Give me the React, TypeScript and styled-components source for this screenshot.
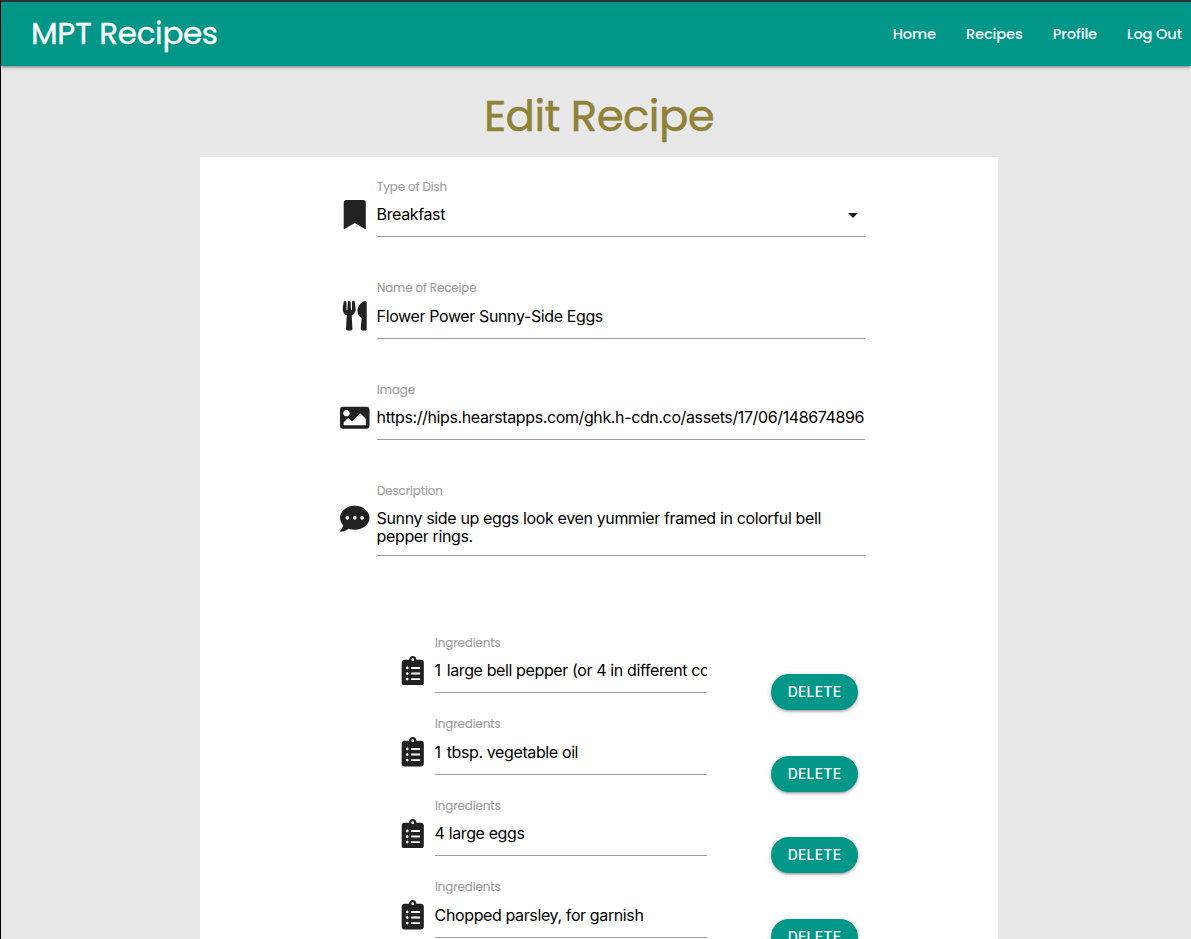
import React from "react";
import styled, { createGlobalStyle } from "styled-components";
import { FaBookmark, FaUtensils, FaImage, FaCommentDots, FaClipboardList } from "react-icons/fa";

const teal = "#009688";

const GlobalStyle = createGlobalStyle`
  *, *::before, *::after { box-sizing: border-box; }
  html, body { margin: 0; height: 939px; overflow: hidden; }
  body { background: #e8e8e8; font-family: Poppins, Inter, sans-serif; color: #212121; }
`;

const Page = styled.div`
  height: 939px;
  overflow: hidden;
  border-left: 1px solid #000;
  border-top: 2px solid #2c3236;
  display: flex;
  flex-direction: column;
`;

const Nav = styled.nav`
  flex: none;
  height: 64px;
  background: ${teal};
  color: #fff;
  display: flex;
  align-items: flex-start;
  justify-content: space-between;
  padding: 0 9px 0 30px;
  box-shadow: 0 2px 2px 0 rgba(0, 0, 0, 0.14), 0 3px 1px -2px rgba(0, 0, 0, 0.12),
    0 1px 5px 0 rgba(0, 0, 0, 0.2);
`;

const Brand = styled.a`
  font-size: 31px;
  line-height: 62px;
  letter-spacing: -0.35px;
  -webkit-text-stroke: 0.35px currentColor;
`;

const NavLinks = styled.div`
  display: flex;
  gap: 30px;
`;

const NavLink = styled.a`
  font-size: 14.6px;
  font-weight: 500;
  line-height: 64px;
  letter-spacing: -0.12px;
  white-space: nowrap;
`;

const Title = styled.h1`
  flex: none;
  margin: 23px 0 0;
  height: 68px;
  line-height: 53px;
  font-size: 43.5px;
  font-weight: 400;
  letter-spacing: -0.6px;
  -webkit-text-stroke: 0.5px currentColor;
  text-align: center;
  color: #908338;
  padding-left: 6px;
`;

const Card = styled.main`
  flex: none;
  width: 798px;
  height: 800px;
  margin-left: 199px;
  padding: 20px 133px 0 140px;
  background: #fff;
`;

const Field = styled.div<{ $height: number }>`
  display: flex;
  height: ${(p) => p.$height}px;
`;

const IconSlot = styled.div`
  flex: none;
  width: 30px;
  height: 30px;
  margin: 22.8px 7px 0 0;
  display: flex;
  justify-content: center;
  font-size: 29.5px;
  color: #212121;
`;

const FieldBody = styled.div`
  flex: 1;
  min-width: 0;
`;

const Label = styled.label`
  display: block;
  height: 20.2px;
  margin-top: -0.2px;
  line-height: 20px;
  font-size: 11.8px;
  letter-spacing: -0.08px;
  -webkit-text-stroke: 0.15px currentColor;
  color: #9e9e9e;
`;

const Value = styled.div`
  display: flex;
  justify-content: space-between;
  height: 40px;
  margin-left: -0.4px;
  border-bottom: 1px solid #9e9e9e;
  font-family: Inter, sans-serif;
  font-size: 16px;
  line-height: 35px;
  letter-spacing: -0.38px;
  color: #000;
  white-space: nowrap;
  overflow: hidden;
`;

const IngredientValue = styled(Value)<{ $lead?: number }>`
  display: block;

  &::first-letter {
    margin-right: ${(p) => p.$lead ?? 0}px;
  }
`;

const TextArea = styled.div`
  height: 54px;
  padding-top: 7.3px;
  margin: 0.5px 0 0 -0.4px;
  border-bottom: 1px solid #9e9e9e;
  font-family: Inter, sans-serif;
  font-size: 16px;
  line-height: 18px;
  letter-spacing: -0.37px;
  color: #000;
  white-space: pre;
`;

const Caret = styled.svg`
  width: 24px;
  height: 24px;
  margin-top: 6px;
  fill: #212121;
`;

const IngredientList = styled.section`
  margin: 50px 0 0 58px;
`;

const Ingredient = styled.div`
  display: flex;
  height: 81.5px;
`;

const IngredientField = styled(Field)`
  width: 309px;
`;

const DeleteButton = styled.button`
  margin: 41px 0 0 64px;
  width: 87px;
  height: 36px;
  padding: 0;
  border: 0;
  border-radius: 18px;
  background: ${teal};
  color: #fff;
  font-family: Inter, sans-serif;
  font-size: 14px;
  font-weight: 500;
  line-height: 36px;
  letter-spacing: 0.2px;
  box-shadow: 0 2px 2px 0 rgba(0, 0, 0, 0.14), 0 3px 1px -2px rgba(0, 0, 0, 0.12),
    0 1px 5px 0 rgba(0, 0, 0, 0.2);
`;

const links = ["Home", "Recipes", "Profile", "Log Out"];

const ingredients = [
  { text: "1 large bell pepper (or 4 in different colors)", lead: 1.8 },
  { text: "1 tbsp. vegetable oil", lead: 1.8 },
  { text: "4 large eggs" },
  { text: "Chopped parsley, for garnish" },
];

export default function App() {
  return (
    <Page>
      <GlobalStyle />
      <Nav>
        <Brand>MPT Recipes</Brand>
        <NavLinks>
          {links.map((text) => (
            <NavLink key={text}>{text}</NavLink>
          ))}
        </NavLinks>
      </Nav>
      <Title>Edit Recipe</Title>
      <Card>
        <Field $height={101.5}>
          <IconSlot><FaBookmark /></IconSlot>
          <FieldBody>
            <Label>Type of Dish</Label>
            <Value>
              Breakfast
              <Caret viewBox="0 0 24 24"><path d="M7 10l5 5 5-5z" /></Caret>
            </Value>
          </FieldBody>
        </Field>
        <Field $height={101.5}>
          <IconSlot><FaUtensils /></IconSlot>
          <FieldBody>
            <Label>Name of Receipe</Label>
            <Value>Flower Power Sunny-Side Eggs</Value>
          </FieldBody>
        </Field>
        <Field $height={101.5}>
          <IconSlot><FaImage /></IconSlot>
          <FieldBody>
            <Label>Image</Label>
            <Value>https://hips.hearstapps.com/ghk.h-cdn.co/assets/17/06/148674896</Value>
          </FieldBody>
        </Field>
        <Field $height={101.5}>
          <IconSlot><FaCommentDots /></IconSlot>
          <FieldBody>
            <Label>Description</Label>
            <TextArea>{"Sunny side up eggs look even yummier framed in colorful bell\npepper rings."}</TextArea>
          </FieldBody>
        </Field>
        <IngredientList>
          {ingredients.map((item) => (
            <Ingredient key={item.text}>
              <IngredientField $height={60}>
                <IconSlot><FaClipboardList /></IconSlot>
                <FieldBody>
                  <Label>Ingredients</Label>
                  <IngredientValue $lead={item.lead}>{item.text}</IngredientValue>
                </FieldBody>
              </IngredientField>
              <DeleteButton>DELETE</DeleteButton>
            </Ingredient>
          ))}
        </IngredientList>
      </Card>
    </Page>
  );
}
